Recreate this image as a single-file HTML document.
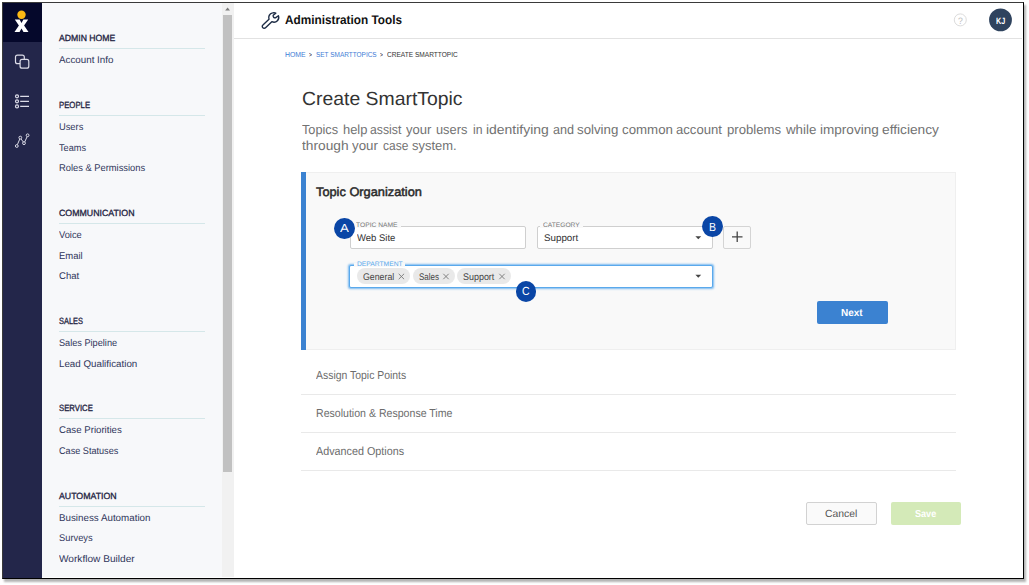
<!DOCTYPE html>
<html><head><meta charset="utf-8">
<style>
*{box-sizing:border-box;margin:0;padding:0}
html,body{width:1029px;height:585px;background:#fff;overflow:hidden;font-family:"Liberation Sans",sans-serif;color:#333;text-rendering:geometricPrecision}
#frame{position:absolute;left:2px;top:2px;width:1022px;height:577px;border:1px solid #000;border-top-color:#3a3a3a;border-left-color:#3a3a3a;box-shadow:2px 2.5px 2px rgba(0,0,0,.3);background:#fff;overflow:hidden}
#in{position:absolute;left:-3px;top:-3px;width:1029px;height:585px}
.a{position:absolute}
.t{position:absolute;white-space:pre;transform-origin:0 0}
#nav{left:3px;top:3px;width:39px;height:575px;background:#23264a}
#logo{left:3px;top:3px;width:39px;height:39px;background:#05082b}
#side{left:42px;top:3px;width:180px;height:573.6px;background:#f7f8fa}
#sbtrack{left:222px;top:3px;width:12px;height:573.6px;background:#f1f1f1}
#sbthumb{left:223px;top:14.6px;width:9px;height:457.1px;background:#c1c1c1}
.sl{position:absolute;left:59px;width:146px;height:1px;background:#d5e7e9}
#hdrline{left:234px;top:38px;width:788px;height:1px;background:#e2e2e2}
#panel{left:301px;top:172px;width:655px;height:178px;background:#f9f9f9;border:1px solid #efefef}
#pbar{left:301px;top:172px;width:5px;height:178px;background:#3b82d1}
.field{position:absolute;background:#fff;border:1px solid #cfcfcf;border-radius:2px}
.lb{position:absolute;height:3px;background:#f9f9f9}
.badge{position:absolute;width:20.8px;height:20.8px;border-radius:50%;background:#0a46a6}
.chip{position:absolute;top:268px;height:16px;border-radius:8px;background:#e9e9e9}
.sep{position:absolute;left:301px;width:655px;height:1px;background:#e9e9e9}
.btn{position:absolute;border-radius:2px}
svg{position:absolute;left:0;top:0;overflow:visible}
</style></head><body>
<div id="frame"><div id="in">
<div class="a" id="nav"></div>
<div class="a" id="logo"></div>
<div class="a" id="side"></div>
<div class="a" id="sbtrack"></div>
<div class="a" id="sbthumb"></div>
<div class="sl" style="top:48px"></div>
<div class="sl" style="top:115px"></div>
<div class="sl" style="top:223px"></div>
<div class="sl" style="top:331px"></div>
<div class="sl" style="top:418px"></div>
<div class="sl" style="top:506px"></div>
<div class="a" id="hdrline"></div>
<div class="a" id="panel"></div>
<div class="a" id="pbar"></div>

<div class="field" style="left:350px;top:226px;width:176px;height:23px"></div>
<div class="lb" style="left:354px;top:224.5px;width:47px"></div>
<div class="field" style="left:536.5px;top:226px;width:176.5px;height:23px"></div>
<div class="lb" style="left:540px;top:224.5px;width:43px"></div>
<div class="field" style="left:723px;top:226px;width:28px;height:23px;background:#f9f9f9;border-color:#d4d4d4"></div>
<div class="field" style="left:349px;top:265px;width:364px;height:23px;border-color:#5aa9ec;box-shadow:0 0 2px 0.5px rgba(90,169,236,.8)"></div>
<div class="lb" style="left:354px;top:263px;width:51px;height:4px"></div>
<div class="chip" style="left:357px;width:52.5px"></div>
<div class="chip" style="left:413px;width:41.5px"></div>
<div class="chip" style="left:457px;width:53.5px"></div>
<div class="badge" style="left:334.2px;top:218px"></div>
<div class="badge" style="left:702.1px;top:216.1px"></div>
<div class="badge" style="left:515.5px;top:281.1px"></div>
<div class="btn" style="left:817px;top:301.4px;width:70.6px;height:22.5px;background:#3b82d1"></div>
<div class="sep" style="top:394px"></div>
<div class="sep" style="top:432px"></div>
<div class="sep" style="top:470px"></div>
<div class="btn" style="left:806px;top:502px;width:70.5px;height:23px;background:#fafafa;border:1px solid #d2d2d2"></div>
<div class="btn" style="left:890.7px;top:502.3px;width:70.2px;height:22.5px;background:#d4eab8"></div>

<svg width="1029" height="585" viewBox="0 0 1029 585">
<!-- logo -->
<circle cx="21.5" cy="14.8" r="4.2" fill="#fdb913"/>
<polygon fill="#fff" points="14.8,19.5 19.6,19.5 21.5,23.0 23.4,19.5 28.2,19.5 24.1,25.6 28.5,32.1 23.5,32.1 21.5,28.4 19.5,32.1 14.5,32.1 18.9,25.6"/>
<!-- nav icons -->
<g fill="none" stroke="#dcdce8" stroke-width="1.2">
<rect x="15.5" y="55.1" width="8.8" height="8.6" rx="2"/>
<rect x="20.1" y="59.4" width="8.7" height="8.8" rx="2" fill="#2a2d52"/>
<circle cx="17" cy="96.3" r="1.5"/><circle cx="17" cy="101.3" r="1.5"/><circle cx="17" cy="106.4" r="1.5"/>
<path d="M20.2 96.3H29M20.2 101.3H29M20.2 106.4H29" stroke-width="1.3"/>
<path d="M17.4 144.6L19.8 139M21 139L23.4 142M24.7 142L27.1 136.7" stroke-width="1"/>
<circle cx="16.8" cy="146" r="1.4" stroke-width="1"/><circle cx="20.3" cy="137.6" r="1.4" stroke-width="1"/><circle cx="24" cy="143.2" r="1.4" stroke-width="1"/><circle cx="27.6" cy="135.3" r="1.4" stroke-width="1"/>
</g>
<!-- scrollbar arrow -->
<polygon fill="#7a7a7a" points="225.2,10.4 230,10.4 227.6,7.4"/>
<!-- wrench -->
<path transform="translate(0.2,0.7)" fill="none" stroke="#1d2c45" stroke-width="1.4" stroke-linejoin="round" d="M263.0 24.0L268.8 18.6C268.0 16.0 269.0 13.0 272.4 12.2C273.5 11.9 274.8 12.0 275.6 12.4L273.0 14.6C272.6 16.0 273.8 17.4 275.2 17.2L278.2 15.0C278.8 16.5 278.6 18.5 277.2 20.0C275.8 21.5 273.5 21.8 271.6 21.0L265.6 26.8C264.6 27.8 263.2 27.7 262.5 26.9C261.7 26.0 262.0 24.8 263.0 24.0Z"/>
<!-- help -->
<circle cx="960.3" cy="19.9" r="6" fill="none" stroke="#dcdcdc" stroke-width="1"/>
<!-- avatar -->
<circle cx="1000.5" cy="19.9" r="11.4" fill="#2f435e"/>
<!-- dropdown arrows -->
<polygon fill="#444" points="695.4,236.2 701.2,236.2 698.3,239.2"/>
<polygon fill="#444" points="695.4,274.8 701.2,274.8 698.3,277.8"/>
<!-- plus -->
<path d="M732 236.8H742.5M737.2 231.5V242" stroke="#444" stroke-width="1.3" fill="none"/>
<!-- chip x -->
<g stroke="#777" stroke-width="0.9" fill="none">
<path d="M398.7 273.8L404.1 279.2M404.1 273.8L398.7 279.2"/>
<path d="M443.3 273.8L448.7 279.2M448.7 273.8L443.3 279.2"/>
<path d="M499.3 273.8L504.7 279.2M504.7 273.8L499.3 279.2"/>
</g>
</svg>
<div class="t" style="left:59.00px;top:32.00px;font-size:9px;line-height:12px;transform:scaleX(0.9624);color:#1f2442;-webkit-text-stroke:0.32px #1f2442;">ADMIN HOME</div>
<div class="t" style="left:59.00px;top:54.00px;font-size:9.8px;line-height:13px;transform:scaleX(0.9998);color:#30365a;">Account Info</div>
<div class="t" style="left:59.00px;top:99.00px;font-size:9px;line-height:12px;transform:scaleX(0.8635);color:#1f2442;-webkit-text-stroke:0.32px #1f2442;">PEOPLE</div>
<div class="t" style="left:59.00px;top:121.00px;font-size:9.8px;line-height:13px;transform:scaleX(0.9500);color:#30365a;">Users</div>
<div class="t" style="left:59.00px;top:142.00px;font-size:9.8px;line-height:13px;transform:scaleX(0.9359);color:#30365a;">Teams</div>
<div class="t" style="left:59.00px;top:162.00px;font-size:9.8px;line-height:13px;transform:scaleX(0.9527);color:#30365a;">Roles &amp; Permissions</div>
<div class="t" style="left:59.00px;top:207.00px;font-size:9px;line-height:12px;transform:scaleX(0.9762);color:#1f2442;-webkit-text-stroke:0.32px #1f2442;">COMMUNICATION</div>
<div class="t" style="left:59.00px;top:229.00px;font-size:9.8px;line-height:13px;transform:scaleX(0.9504);color:#30365a;">Voice</div>
<div class="t" style="left:59.00px;top:250.00px;font-size:9.8px;line-height:13px;transform:scaleX(0.9663);color:#30365a;">Email</div>
<div class="t" style="left:59.00px;top:270.00px;font-size:9.8px;line-height:13px;transform:scaleX(0.9775);color:#30365a;">Chat</div>
<div class="t" style="left:59.00px;top:315.00px;font-size:9px;line-height:12px;transform:scaleX(0.8272);color:#1f2442;-webkit-text-stroke:0.32px #1f2442;">SALES</div>
<div class="t" style="left:59.00px;top:337.00px;font-size:9.8px;line-height:13px;transform:scaleX(0.9355);color:#30365a;">Sales Pipeline</div>
<div class="t" style="left:59.00px;top:358.00px;font-size:9.8px;line-height:13px;transform:scaleX(0.9977);color:#30365a;">Lead Qualification</div>
<div class="t" style="left:59.00px;top:402.00px;font-size:9px;line-height:12px;transform:scaleX(0.8591);color:#1f2442;-webkit-text-stroke:0.32px #1f2442;">SERVICE</div>
<div class="t" style="left:59.00px;top:424.00px;font-size:9.8px;line-height:13px;transform:scaleX(0.9859);color:#30365a;">Case Priorities</div>
<div class="t" style="left:59.00px;top:445.00px;font-size:9.8px;line-height:13px;transform:scaleX(0.9308);color:#30365a;">Case Statuses</div>
<div class="t" style="left:59.00px;top:490.00px;font-size:9px;line-height:12px;transform:scaleX(0.9733);color:#1f2442;-webkit-text-stroke:0.32px #1f2442;">AUTOMATION</div>
<div class="t" style="left:59.00px;top:512.00px;font-size:9.8px;line-height:13px;transform:scaleX(0.9995);color:#30365a;">Business Automation</div>
<div class="t" style="left:59.00px;top:532.00px;font-size:9.8px;line-height:13px;transform:scaleX(0.9524);color:#30365a;">Surveys</div>
<div class="t" style="left:59.00px;top:553.00px;font-size:9.8px;line-height:13px;transform:scaleX(1.0330);color:#30365a;">Workflow Builder</div>
<div class="t" style="left:284.90px;top:12.00px;font-size:12.5px;line-height:16px;transform:scaleX(0.9434);font-weight:bold;color:#111;">Administration Tools</div>
<div class="t" style="left:284.90px;top:50.00px;font-size:7.3px;line-height:9px;transform:scaleX(0.9444);color:#437dd6;">HOME</div>
<div class="t" style="left:309.20px;top:52.00px;font-size:6.5px;line-height:8px;transform:scaleX(0.7500);font-weight:bold;color:#445;">&gt;</div>
<div class="t" style="left:316.00px;top:50.00px;font-size:7.3px;line-height:9px;transform:scaleX(0.8855);color:#437dd6;">SET SMARTTOPICS</div>
<div class="t" style="left:380.00px;top:52.00px;font-size:6.5px;line-height:8px;transform:scaleX(0.7500);font-weight:bold;color:#445;">&gt;</div>
<div class="t" style="left:387.30px;top:50.00px;font-size:7.3px;line-height:9px;transform:scaleX(0.8994);color:#333;">CREATE SMARTTOPIC</div>
<div class="t" style="left:301.80px;top:87.00px;font-size:19px;line-height:25px;transform:scaleX(1.0202);color:#333;">Create SmartTopic</div>
<div class="t" style="left:302.30px;top:121.00px;font-size:13.2px;line-height:17px;transform:scaleX(0.9660);color:#727272;">Topics</div>
<div class="t" style="left:342.50px;top:121.00px;font-size:13.2px;line-height:17px;transform:scaleX(0.9797);color:#727272;">help</div>
<div class="t" style="left:370.30px;top:121.00px;font-size:13.2px;line-height:17px;transform:scaleX(0.9282);color:#727272;">assist</div>
<div class="t" style="left:405.80px;top:121.00px;font-size:13.2px;line-height:17px;transform:scaleX(0.9900);color:#727272;">your</div>
<div class="t" style="left:436.10px;top:121.00px;font-size:13.2px;line-height:17px;transform:scaleX(0.9708);color:#727272;">users</div>
<div class="t" style="left:472.50px;top:121.00px;font-size:13.2px;line-height:17px;transform:scaleX(0.9265);color:#727272;">in</div>
<div class="t" style="left:486.40px;top:121.00px;font-size:13.2px;line-height:17px;transform:scaleX(1.0568);color:#727272;">identifying</div>
<div class="t" style="left:552.70px;top:121.00px;font-size:13.2px;line-height:17px;transform:scaleX(0.9553);color:#727272;">and</div>
<div class="t" style="left:577.30px;top:121.00px;font-size:13.2px;line-height:17px;transform:scaleX(1.0070);color:#727272;">solving</div>
<div class="t" style="left:621.80px;top:121.00px;font-size:13.2px;line-height:17px;transform:scaleX(1.0073);color:#727272;">common</div>
<div class="t" style="left:676.10px;top:121.00px;font-size:13.2px;line-height:17px;transform:scaleX(0.9930);color:#727272;">account</div>
<div class="t" style="left:727.00px;top:121.00px;font-size:13.2px;line-height:17px;transform:scaleX(0.9974);color:#727272;">problems</div>
<div class="t" style="left:785.71px;top:121.00px;font-size:13.2px;line-height:17px;transform:scaleX(1.0092);color:#727272;">while</div>
<div class="t" style="left:820.40px;top:121.00px;font-size:13.2px;line-height:17px;transform:scaleX(1.0276);color:#727272;">improving</div>
<div class="t" style="left:882.00px;top:121.00px;font-size:13.2px;line-height:17px;transform:scaleX(1.0410);color:#727272;">efficiency</div>
<div class="t" style="left:302.30px;top:137.00px;font-size:13.2px;line-height:17px;transform:scaleX(1.0407);color:#727272;">through</div>
<div class="t" style="left:352.30px;top:137.00px;font-size:13.2px;line-height:17px;transform:scaleX(1.0091);color:#727272;">your</div>
<div class="t" style="left:382.70px;top:137.00px;font-size:13.2px;line-height:17px;transform:scaleX(0.9084);color:#727272;">case</div>
<div class="t" style="left:411.50px;top:137.00px;font-size:13.2px;line-height:17px;transform:scaleX(0.9807);color:#727272;">system.</div>
<div class="t" style="left:316.30px;top:184.00px;font-size:12.4px;line-height:16px;transform:scaleX(1.0318);color:#2a2a2a;-webkit-text-stroke:0.5px #2a2a2a;">Topic Organization</div>
<div class="t" style="left:356.20px;top:221.00px;font-size:6.6px;line-height:9px;transform:scaleX(1.0165);color:#787878;">TOPIC NAME</div>
<div class="t" style="left:357.20px;top:232.00px;font-size:9.7px;line-height:13px;transform:scaleX(0.9783);color:#333;">Web Site</div>
<div class="t" style="left:542.90px;top:221.00px;font-size:6.6px;line-height:9px;transform:scaleX(1.0082);color:#787878;">CATEGORY</div>
<div class="t" style="left:543.70px;top:232.00px;font-size:9.7px;line-height:13px;transform:scaleX(1.0106);color:#333;">Support</div>
<div class="t" style="left:356.60px;top:260.00px;font-size:6.6px;line-height:9px;transform:scaleX(1.0181);color:#5aa9ec;">DEPARTMENT</div>
<div class="t" style="left:362.50px;top:271.00px;font-size:9.7px;line-height:13px;transform:scaleX(0.9064);color:#444;">General</div>
<div class="t" style="left:418.50px;top:271.00px;font-size:9.7px;line-height:13px;transform:scaleX(0.8241);color:#444;">Sales</div>
<div class="t" style="left:463.00px;top:271.00px;font-size:9.7px;line-height:13px;transform:scaleX(0.9229);color:#444;">Support</div>
<div class="t" style="left:841.10px;top:307.00px;font-size:10.2px;line-height:13px;transform:scaleX(0.9785);font-weight:bold;color:#fff;">Next</div>
<div class="t" style="left:315.70px;top:368.00px;font-size:11.6px;line-height:15px;transform:scaleX(0.8993);color:#6c6c6c;">Assign Topic Points</div>
<div class="t" style="left:315.70px;top:406.00px;font-size:11.6px;line-height:15px;transform:scaleX(0.9124);color:#6c6c6c;">Resolution &amp; Response Time</div>
<div class="t" style="left:315.70px;top:444.00px;font-size:11.6px;line-height:15px;transform:scaleX(0.9290);color:#6c6c6c;">Advanced Options</div>
<div class="t" style="left:825.10px;top:508.00px;font-size:10.4px;line-height:14px;transform:scaleX(0.9989);color:#555;">Cancel</div>
<div class="t" style="left:914.80px;top:508.00px;font-size:10.2px;line-height:13px;transform:scaleX(0.8911);font-weight:bold;color:#fff;">Save</div>
<div class="t" style="left:996.00px;top:15.00px;font-size:9px;line-height:12px;transform:scaleX(0.8087);font-weight:bold;color:#fff;">KJ</div>
<div class="t" style="left:340.00px;top:221.00px;font-size:11.8px;line-height:15px;transform:scaleX(1.1250);color:#fff;">A</div>
<div class="t" style="left:708.90px;top:220.00px;font-size:11.8px;line-height:15px;transform:scaleX(0.8875);color:#fff;">B</div>
<div class="t" style="left:521.90px;top:284.00px;font-size:11.8px;line-height:15px;transform:scaleX(0.8889);color:#fff;">C</div>
<div class="t" style="left:958.20px;top:15.00px;font-size:9.4px;line-height:12px;transform:scaleX(0.9200);color:#bdbdbd;">?</div>

</div></div>
</body></html>
